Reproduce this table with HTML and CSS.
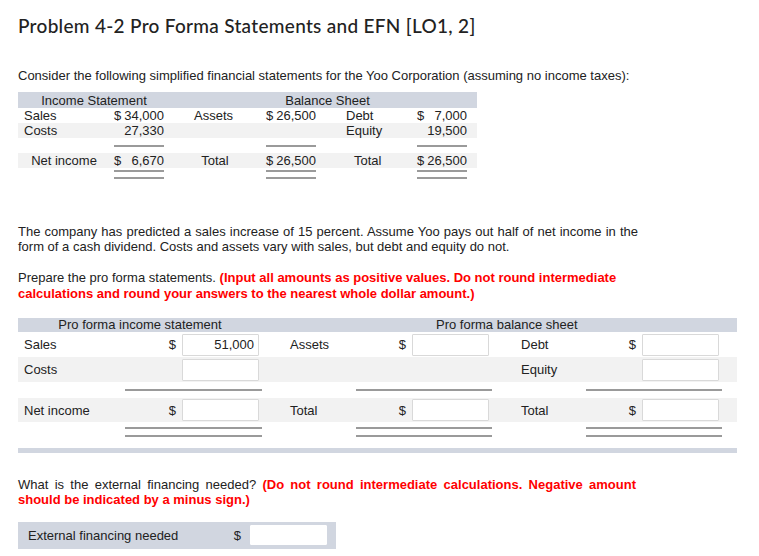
FILE: index.html
```html
<!DOCTYPE html>
<html>
<head>
<meta charset="utf-8">
<link rel="stylesheet" href="styles.css">
</head>
<body>
<div class="page">
  <h1 class="title">Problem 4-2 Pro Forma Statements and EFN [LO1, 2]</h1>
  <p class="intro">Consider the following simplified financial statements for the Yoo Corporation (assuming no income taxes):</p>

  <table class="given">
    <colgroup><col class="g1"><col class="g2"><col class="g3"><col class="g4"><col class="g5"><col class="g6"></colgroup>
    <tr class="ghead">
      <td colspan="2" class="ctr">Income Statement</td>
      <td colspan="4" class="ctr bs">Balance Sheet</td>
    </tr>
    <tr>
      <td class="lab">Sales</td>
      <td><div class="amt a2"><span>$</span><span>34,000</span></div></td>
      <td class="lab3">Assets</td>
      <td><div class="amt a4"><span>$</span><span>26,500</span></div></td>
      <td class="lab5">Debt</td>
      <td><div class="amt a6"><span>$</span><span>7,000</span></div></td>
    </tr>
    <tr class="shade">
      <td class="lab">Costs</td>
      <td><div class="amt a2"><span></span><span>27,330</span></div></td>
      <td></td>
      <td></td>
      <td class="lab5">Equity</td>
      <td><div class="amt a6"><span></span><span>19,500</span></div></td>
    </tr>
    <tr class="lrow">
      <td></td>
      <td><div class="rule a2"></div></td>
      <td></td>
      <td><div class="rule a4"></div></td>
      <td></td>
      <td><div class="rule a6"></div></td>
    </tr>
    <tr class="shade">
      <td class="ctr">Net income</td>
      <td><div class="amt a2"><span>$</span><span>6,670</span></div></td>
      <td class="ctr">Total</td>
      <td><div class="amt a4"><span>$</span><span>26,500</span></div></td>
      <td class="tot5">Total</td>
      <td><div class="amt a6"><span>$</span><span>26,500</span></div></td>
    </tr>
    <tr class="drow">
      <td></td>
      <td><div class="rule2 a2"></div></td>
      <td></td>
      <td><div class="rule2 a4"></div></td>
      <td></td>
      <td><div class="rule2 a6"></div></td>
    </tr>
  </table>

  <p class="para desc">The company has predicted a sales increase of 15 percent. Assume Yoo pays out half of net income in the form of a cash dividend. Costs and assets vary with sales, but debt and equity do not.</p>

  <p class="para prep">Prepare the pro forma statements. <b class="red">(Input all amounts as positive values. Do not round intermediate calculations and round your answers to the nearest whole dollar amount.)</b></p>

  <table class="proforma">
    <colgroup><col class="p1"><col class="p2"><col class="p3"><col class="p4"><col class="p5"><col class="p6"><col class="p7"></colgroup>
    <tr class="phead">
      <td colspan="2" class="ctr">Pro forma income statement</td>
      <td colspan="5" class="pbs">Pro forma balance sheet</td>
    </tr>
    <tr class="prow">
      <td class="plab">Sales</td>
      <td><div class="field"><span>$</span><span class="box val">51,000</span></div></td>
      <td class="plab3">Assets</td>
      <td><div class="field"><span>$</span><span class="box"></span></div></td>
      <td class="plab5">Debt</td>
      <td><div class="field"><span>$</span><span class="box"></span></div></td>
      <td></td>
    </tr>
    <tr class="prow shade">
      <td class="plab">Costs</td>
      <td><div class="field"><span class="box"></span></div></td>
      <td></td>
      <td></td>
      <td class="plab5">Equity</td>
      <td><div class="field"><span class="box"></span></div></td>
      <td></td>
    </tr>
    <tr class="plrow">
      <td></td>
      <td><div class="prule"></div></td>
      <td></td>
      <td><div class="prule"></div></td>
      <td></td>
      <td><div class="prule"></div></td>
      <td></td>
    </tr>
    <tr class="nrow shade">
      <td class="plab">Net income</td>
      <td><div class="field"><span>$</span><span class="box"></span></div></td>
      <td class="plab3">Total</td>
      <td><div class="field"><span>$</span><span class="box"></span></div></td>
      <td class="plab5">Total</td>
      <td><div class="field"><span>$</span><span class="box"></span></div></td>
      <td></td>
    </tr>
    <tr class="pdrow">
      <td></td>
      <td><div class="prule2"></div></td>
      <td></td>
      <td><div class="prule2"></div></td>
      <td></td>
      <td><div class="prule2"></div></td>
      <td></td>
    </tr>
    <tr class="pfoot"><td colspan="7"></td></tr>
  </table>

  <p class="para efnq">What is the external financing needed? <b class="red">(Do not round intermediate calculations. Negative amount should be indicated by a minus sign.)</b></p>

  <div class="efn">
    <span class="efnlab">External financing needed</span>
    <span class="field"><span>$</span><span class="box efnbox"></span></span>
  </div>
</div>
</body>
</html>
```

FILE: styles.css
```css
* { box-sizing: border-box; }
html, body { margin: 0; padding: 0; background: #fff; }
body { font-family: "Liberation Sans", Arial, sans-serif; color: #222; font-size: 13px; }
.page { padding: 0 0 0 18px; width: 759px; }

.title {
  font-family: Lato, "Noto Sans", sans-serif;
  font-weight: 500;
  font-size: 19px;
  line-height: 22px;
  margin: 15px 0 0 0;
  color: #222;
  letter-spacing: 0.3px;
}

.intro { margin: 31px 0 0 0; font-size: 13px; line-height: 16px; color: #222; }

/* given statements */
.given { border-collapse: collapse; table-layout: fixed; width: 459px; margin-top: 8px; }
.given td { padding: 0; height: 15px; line-height: 15px; font-size: 13px; white-space: nowrap; }
.g1 { width: 92px; } .g2 { width: 60px; } .g3 { width: 90px; }
.g4 { width: 62px; } .g5 { width: 88px; } .g6 { width: 67px; }
.ghead td { background: #d1d6e0; height: 16px; }
.ctr { text-align: center; }
.bs { padding-left: 8px !important; }
.lab { padding-left: 6px !important; }
.lab3 { padding-left: 24px !important; }
.lab5 { padding-left: 24px !important; }
.tot5 { padding-left: 32px !important; }
.shade td { background: #f2f2f2; }
.amt { display: flex; justify-content: space-between; width: 50px; }
.a2 { margin-left: 4px; }
.a4 { margin-left: 6px; }
.a6 { margin-left: 7px; }
.rule { height: 2px; width: 50px; background: #9a9a9a; }
.rule2 { height: 9px; width: 50px; border-top: 2px solid #9a9a9a; border-bottom: 2px solid #9a9a9a; margin-top: 2px; }
.drow td { height: 20px; vertical-align: top; }

.para { margin: 0; font-size: 13px; line-height: 15px; width: 625px; }
.desc { margin-top: 36px; width: 620px; text-align: justify; }
.prep { margin-top: 16px; line-height: 16px; }
.red { color: #f00; font-weight: bold; }

/* pro forma */
.proforma { border-collapse: collapse; table-layout: fixed; width: 719px; margin-top: 16px; }
.proforma td { padding: 0; font-size: 13px; white-space: nowrap; }
.p1 { width: 107px; } .p2 { width: 137px; } .p3 { width: 94px; }
.p4 { width: 136px; } .p5 { width: 94px; } .p6 { width: 136px; } .p7 { width: 15px; }
.phead td { background: #d1d6e0; height: 14px; line-height: 14px; }
.pbs { padding-left: 174px !important; text-align: left; }
.prow td { height: 25px; }
.nrow td { height: 24px; }
.plab { padding-left: 6px !important; }
.plab3 { padding-left: 28px !important; }
.plab5 { padding-left: 29px !important; }
.field { display: flex; justify-content: flex-end; align-items: center; gap: 6px; padding-right: 3px; }
.box { display: inline-block; width: 77px; height: 22px; border: 1px solid #d9d9d9; background: #fff; text-align: right; line-height: 20px; padding-right: 4px; border-radius: 1px; }
.plrow td { height: 16px; vertical-align: middle; }
.prule { height: 2px; background: #9a9a9a; }
.pdrow td { height: 19px; vertical-align: top; }
.prule2 { height: 10px; border-top: 2px solid #9a9a9a; border-bottom: 2px solid #9a9a9a; margin-top: 5px; }
.pfoot td { height: 9px; border-bottom: 5px solid #d1d6e0; }

.efnq { margin-top: 24px; line-height: 15px; width: 618px; text-align: justify; }
.efn { display: flex; justify-content: space-between; align-items: center; width: 318px; height: 27px; background: #d1d6e0; margin-top: 15px; padding: 0 9px 0 10px; font-size: 13px; }
.efnbox { width: 77px; height: 20px; border: 1px solid #fff; }
.efn .field { padding-right: 0; gap: 9px; }
```
